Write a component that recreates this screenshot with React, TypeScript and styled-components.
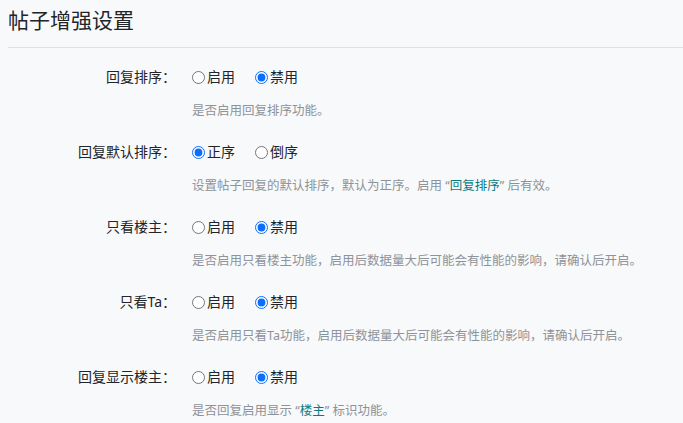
import React, { useState } from "react";
import styled, { createGlobalStyle } from "styled-components";

const Global = createGlobalStyle`
  html, body { margin: 0; padding: 0; background: #f8f9fa; }
  body {
    font-family: "Noto Sans", "Noto Sans CJK SC", sans-serif;
    color: #212529;
  }
`;

const Page = styled.div`
  padding: 8px 0 0 8px;
  min-height: 415px;
  background: #f8f9fa;
`;

const Header = styled.div`
  border-bottom: 1px solid #dee2e6;
  padding-bottom: 14px;
  margin-bottom: 17px;
`;

const Title = styled.h1`
  margin: 0;
  font-size: 21px;
  line-height: 25px;
  font-weight: 400;
  color: #212529;
`;

const Form = styled.div`
  display: flex;
  flex-direction: column;
  gap: 20px;
`;

const Group = styled.div`
  display: grid;
  grid-template-columns: 168px 1fr;
  column-gap: 16px;
  row-gap: 13px;
`;

const Label = styled.div`
  font-size: 14px;
  line-height: 24px;
  text-align: right;
`;

const Options = styled.div`
  display: flex;
  align-items: center;
  height: 24px;
`;

const Option = styled.label`
  display: flex;
  align-items: center;
  font-size: 14px;
  line-height: 24px;
  margin-right: 20px;
  cursor: pointer;
`;

const Radio = styled.input`
  width: 13px;
  height: 13px;
  margin: 0 2px 0 0;
  accent-color: #0d6efd;
`;

const Desc = styled.div`
  grid-column: 2;
  font-size: 12.5px;
  line-height: 18px;
  color: #8e9399;
`;

const Hl = styled.span`
  color: #0b7a80;
`;

type Setting = {
  key: string;
  label: string;
  options: [string, string];
  value: number;
  desc: React.ReactNode;
};

const settings: Setting[] = [
  { key: "sort", label: "回复排序：", options: ["启用", "禁用"], value: 1, desc: "是否启用回复排序功能。" },
  {
    key: "order",
    label: "回复默认排序：",
    options: ["正序", "倒序"],
    value: 0,
    desc: (
      <>
        设置帖子回复的默认排序，默认为正序。启用 “<Hl>回复排序</Hl>” 后有效。
      </>
    ),
  },
  {
    key: "owner",
    label: "只看楼主：",
    options: ["启用", "禁用"],
    value: 1,
    desc: "是否启用只看楼主功能，启用后数据量大后可能会有性能的影响，请确认后开启。",
  },
  {
    key: "ta",
    label: "只看Ta：",
    options: ["启用", "禁用"],
    value: 1,
    desc: "是否启用只看Ta功能，启用后数据量大后可能会有性能的影响，请确认后开启。",
  },
  {
    key: "show",
    label: "回复显示楼主：",
    options: ["启用", "禁用"],
    value: 1,
    desc: (
      <>
        是否回复启用显示 “<Hl>楼主</Hl>” 标识功能。
      </>
    ),
  },
];

export default function App() {
  const [vals, setVals] = useState<Record<string, number>>(
    Object.fromEntries(settings.map((s) => [s.key, s.value]))
  );
  return (
    <Page>
      <Global />
      <Header>
        <Title>帖子增强设置</Title>
      </Header>
      <Form>
        {settings.map((s) => (
          <Group key={s.key}>
            <Label>{s.label}</Label>
            <Options>
              {s.options.map((o, i) => (
                <Option key={o}>
                  <Radio
                    type="radio"
                    name={s.key}
                    checked={vals[s.key] === i}
                    onChange={() => setVals({ ...vals, [s.key]: i })}
                  />
                  {o}
                </Option>
              ))}
            </Options>
            <Desc>{s.desc}</Desc>
          </Group>
        ))}
      </Form>
    </Page>
  );
}
